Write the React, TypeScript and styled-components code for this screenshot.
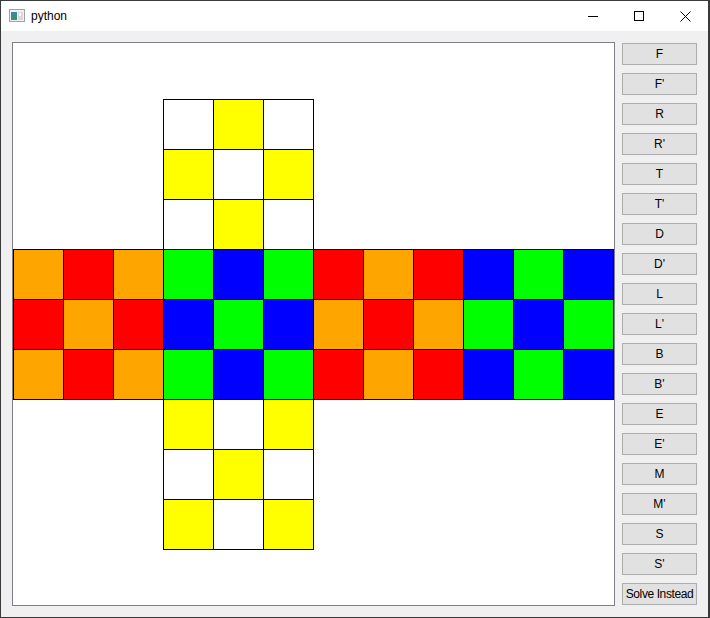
import React from "react"
import styled, { createGlobalStyle } from "styled-components"

type Color = "W" | "Y" | "O" | "R" | "G" | "B"

const palette: Record<Color, string> = {
  W: "#ffffff",
  Y: "#ffff00",
  O: "#ffa500",
  R: "#ff0000",
  G: "#00ff00",
  B: "#0000ff",
}

// top face, the four side faces in one strip, then the bottom face
const topFace: Color[][] = [
  ["W", "Y", "W"],
  ["Y", "W", "Y"],
  ["W", "Y", "W"],
]

const strip: Color[][] = [
  ["O", "R", "O", "G", "B", "G", "R", "O", "R", "B", "G", "B"],
  ["R", "O", "R", "B", "G", "B", "O", "R", "O", "G", "B", "G"],
  ["O", "R", "O", "G", "B", "G", "R", "O", "R", "B", "G", "B"],
]

const bottomFace: Color[][] = [
  ["Y", "W", "Y"],
  ["W", "Y", "W"],
  ["Y", "W", "Y"],
]

const moves = ["F", "F'", "R", "R'", "T", "T'", "D", "D'", "L", "L'", "B", "B'", "E", "E'", "M", "M'", "S", "S'", "Solve Instead"]

const CELL = 50
const TOP = 56

const GlobalStyle = createGlobalStyle`
  html, body {
    margin: 0;
    padding: 0;
    overflow: hidden;
    background: #ffffff;
  }
`

const S = {
  Window: styled.div`
    box-sizing: border-box;
    width: 710px;
    height: 618px;
    display: flex;
    flex-direction: column;
    border: 1px solid #3a3a3a;
    border-right-width: 2px;
    background: #f0f0f0;
    font-family: "Liberation Sans", Arial, sans-serif;
  `,
  TitleBar: styled.div`
    height: 30px;
    flex: none;
    display: flex;
    align-items: center;
    background: #ffffff;
  `,
  AppIcon: styled.svg`
    margin-left: 8px;
    flex: none;
  `,
  Title: styled.span`
    margin-left: 6px;
    font-size: 12px;
    color: #000000;
    flex: 1;
    padding-bottom: 1px;
  `,
  Control: styled.div`
    width: 46px;
    height: 30px;
    display: flex;
    align-items: center;
    justify-content: center;
  `,
  Body: styled.div`
    flex: 1;
    display: flex;
    align-items: flex-start;
    padding: 11px;
    gap: 7px;
  `,
  Canvas: styled.div`
    width: 601px;
    height: 562px;
    border: 1px solid #7e8088;
    background: #ffffff;
    flex: none;
  `,
  Buttons: styled.div`
    width: 75px;
    display: flex;
    flex-direction: column;
    gap: 8px;
    margin-top: 1px;
  `,
  MoveButton: styled.button<{ $wide?: boolean }>`
    box-sizing: border-box;
    width: 75px;
    height: 22px;
    padding: 0;
    margin: 0;
    border: 1px solid #adadad;
    background: #e1e1e1;
    color: #000000;
    font-family: "Liberation Sans", Arial, sans-serif;
    font-size: 12px;
    letter-spacing: ${(p) => (p.$wide ? "-0.4px" : "0")};
    white-space: nowrap;
    overflow: hidden;
    cursor: default;
  `,
}

const Face: React.FC<{ grid: Color[][]; col: number; row: number }> = ({ grid, col, row }) => (
  <>
    {grid.map((line, r) =>
      line.map((c, i) => (
        <rect
          key={`${r}-${i}`}
          x={(col + i) * CELL + 0.5}
          y={TOP + (row + r) * CELL + 0.5}
          width={CELL}
          height={CELL}
          fill={palette[c]}
          stroke="#000"
          strokeWidth={1}
        />
      ))
    )}
  </>
)

export default function App() {
  return (
    <>
      <GlobalStyle />
      <S.Window>
        <S.TitleBar>
          <S.AppIcon width="16" height="14" viewBox="0 0 16 14">
            <defs>
              <linearGradient id="pane" x1="0" y1="0" x2="0" y2="1">
                <stop offset="0" stopColor="#3f86a8" />
                <stop offset="1" stopColor="#3d8f6a" />
              </linearGradient>
            </defs>
            <rect x="0.5" y="0.5" width="15" height="12" fill="#f2f2f2" stroke="#a0a0a0" />
            <rect x="2" y="3" width="6" height="8" fill="url(#pane)" />
            <rect x="9" y="3" width="5" height="8" fill="#d6dada" />
            <rect x="10" y="4" width="2" height="3" fill="#ffffff" />
          </S.AppIcon>
          <S.Title>python</S.Title>
          <S.Control>
            <svg width="10" height="10" viewBox="0 0 10 10" shapeRendering="crispEdges">
              <line x1="0" y1="5.5" x2="10" y2="5.5" stroke="#000" strokeWidth="1" />
            </svg>
          </S.Control>
          <S.Control>
            <svg width="10" height="10" viewBox="0 0 10 10" shapeRendering="crispEdges">
              <rect x="0.5" y="0.5" width="9" height="9" fill="none" stroke="#000" strokeWidth="1" />
            </svg>
          </S.Control>
          <S.Control>
            <svg width="11" height="11" viewBox="0 0 11 11">
              <path d="M0.5 0.5 L10.5 10.5 M10.5 0.5 L0.5 10.5" stroke="#000" strokeWidth="1" />
            </svg>
          </S.Control>
        </S.TitleBar>
        <S.Body>
          <S.Canvas>
            <svg width="601" height="562" viewBox="0 0 601 562" shapeRendering="crispEdges">
              <Face grid={topFace} col={3} row={0} />
              <Face grid={strip} col={0} row={3} />
              <Face grid={bottomFace} col={3} row={6} />
            </svg>
          </S.Canvas>
          <S.Buttons>
            {moves.map((m) => (
              <S.MoveButton key={m} $wide={m.length > 2}>
                {m}
              </S.MoveButton>
            ))}
          </S.Buttons>
        </S.Body>
      </S.Window>
    </>
  )
}
